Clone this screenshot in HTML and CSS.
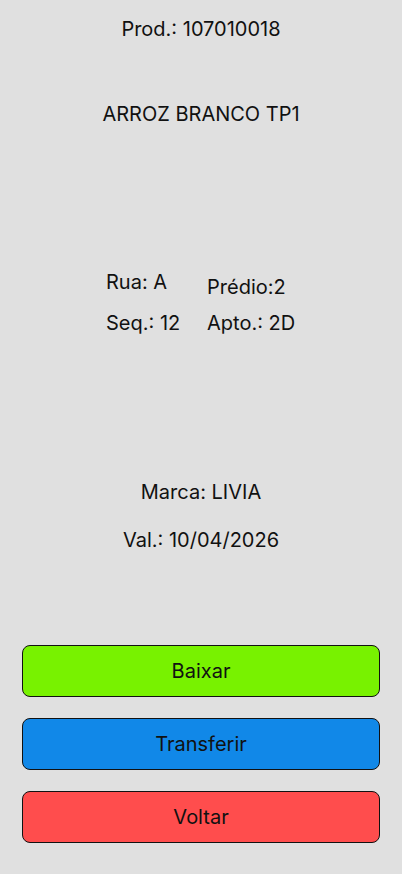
FILE: index.html
```html
<!DOCTYPE html>
<html lang="pt">
<head>
<meta charset="utf-8">
<link rel="stylesheet" href="styles.css">
</head>
<body>
<main class="screen">
  <p class="line prod">Prod.: 107010018</p>
  <p class="line desc">ARROZ BRANCO TP1</p>
  <div class="loc">
    <span class="cell">Rua: A</span>
    <span class="cell predio">Prédio:2</span>
    <span class="cell">Seq.: 12</span>
    <span class="cell">Apto.: 2D</span>
  </div>
  <p class="line marca">Marca: LIVIA</p>
  <p class="line val">Val.: 10/04/2026</p>
  <div class="actions">
    <button class="btn green">Baixar</button>
    <button class="btn blue">Transferir</button>
    <button class="btn red">Voltar</button>
  </div>
</main>
</body>
</html>
```
FILE: styles.css
```css
html, body {
  margin: 0;
  padding: 0;
  background: #e0e0e0;
}
body {
  font-family: Inter, "Noto Sans", sans-serif;
  font-size: 20px;
  color: #111;
}
.screen {
  display: flex;
  flex-direction: column;
  padding-top: 17px;
}
.line {
  margin: 0;
  text-align: center;
  line-height: 24px;
}
.desc { margin-top: 61px; }
.loc {
  margin-top: 144px;
  display: grid;
  grid-template-columns: 101px 90px;
  justify-content: center;
  row-gap: 12px;
  line-height: 24px;
  padding-left: 1px;
}
.predio { margin-top: 5px; }
.marca { margin-top: 145px; }
.val { margin-top: 24px; }
.actions {
  margin: 93px 22px 0;
  display: flex;
  flex-direction: column;
  gap: 21px;
}
.btn {
  box-sizing: border-box;
  height: 52px;
  border: 1px solid #111;
  border-radius: 8px;
  font-family: Inter, "Noto Sans", sans-serif;
  font-size: 20px;
  color: #111;
  padding: 0;
}
.green { background: #78f200; }
.blue { background: #1188e8; }
.red { background: #ff4d4d; }
```
